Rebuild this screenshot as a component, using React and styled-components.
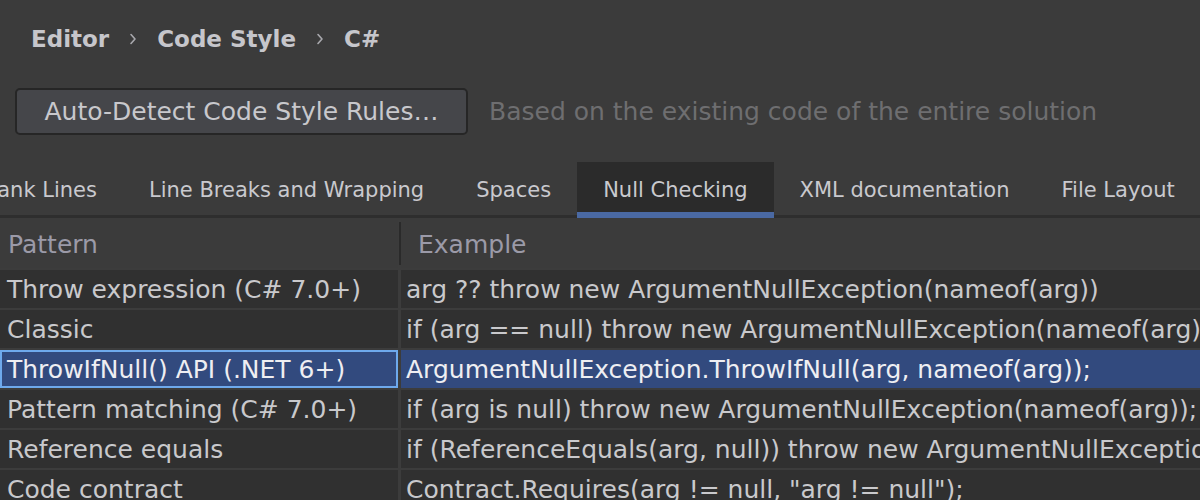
import React from "react";
import styled, { createGlobalStyle } from "styled-components";

const GlobalStyle = createGlobalStyle`
  html, body { margin: 0; padding: 0; background: #3b3b3b; }
  body { font-family: "DejaVu Sans", "Liberation Sans", sans-serif; overflow: hidden; }
`;

const Page = styled.div`
  width: 1200px;
  height: 500px;
  overflow: hidden;
  background: #3b3b3b;
  display: flex;
  flex-direction: column;
  & > * {
    flex-shrink: 0;
  }
`;

const Breadcrumb = styled.div`
  display: flex;
  align-items: center;
  height: 36px;
  margin-top: 21px;
  padding-left: 31px;
  gap: 20px;
  color: #c6c6cb;
  font-size: 23px;
  font-weight: 700;
`;

const Crumb = styled.span`
  white-space: nowrap;
`;

const Chevron = () => (
  <svg width="8" height="12" viewBox="0 0 8 12" fill="none">
    <path d="M2 1.5 L6 6 L2 10.5" stroke="#a8a8ad" strokeWidth="1.6" strokeLinecap="round" strokeLinejoin="round" />
  </svg>
);

const ActionRow = styled.div`
  display: flex;
  align-items: center;
  gap: 21px;
  margin-top: 31px;
  padding-left: 15px;
`;

const Button = styled.button`
  box-sizing: border-box;
  width: 453px;
  height: 47px;
  background: #45464a;
  border: 2px solid #262626;
  border-radius: 5px;
  color: #c8c8cc;
  font-family: inherit;
  font-size: 25px;
  padding: 0;
  white-space: nowrap;
`;

const Hint = styled.span`
  color: #6e6e70;
  font-size: 25px;
  white-space: nowrap;
`;

const TabBar = styled.div`
  margin-top: 27px;
  height: 56px;
  display: flex;
  overflow: hidden;
  box-shadow: inset 0 -3px 0 #2e2e2e;
`;

const TabTrack = styled.div`
  display: flex;
  margin-left: -49px;
`;

const Tab = styled.div`
  box-sizing: border-box;
  height: 56px;
  padding: 5px 26px 0;
  display: flex;
  align-items: center;
  white-space: nowrap;
  font-size: 21px;
  color: #c9c9ce;
  background: ${(p) => (p.$active ? "#2b2b2b" : "transparent")};
  border-bottom: 6px solid ${(p) => (p.$active ? "#4a69a3" : "transparent")};
`;

const Table = styled.div`
  margin-top: 2px;
  display: grid;
  grid-template-columns: 398px 1fr;
  column-gap: 3px;
  row-gap: 2px;
  background: #3c3c3c;
`;

const HeaderCell = styled.div`
  box-sizing: border-box;
  height: 48px;
  display: flex;
  align-items: center;
  padding-left: ${(p) => (p.$first ? "8px" : "17px")};
  font-size: 25px;
  color: #9b9aa8;
  background: #3b3b3b;
  position: relative;
  &::before {
    content: "";
    display: ${(p) => (p.$first ? "none" : "block")};
    position: absolute;
    left: -2px;
    top: 2px;
    bottom: 3px;
    width: 2px;
    background: #2a2a2a;
  }
`;

const Cell = styled.div`
  box-sizing: border-box;
  height: 38px;
  display: flex;
  align-items: center;
  padding-top: 1px;
  padding-left: ${(p) => (p.$first ? "7px" : "5px")};
  font-size: 25px;
  white-space: nowrap;
  overflow: hidden;
  color: ${(p) => (p.$selected ? "#eeeef2" : "#c9c9cc")};
  background: ${(p) => (p.$selected ? "#324a7e" : "#303030")};
  border: ${(p) => (p.$selected && p.$first ? "2px solid #6ea9ec" : "none")};
  ${(p) => (p.$selected && p.$first ? "padding-left: 5px;" : "")}
`;

const rows = [
  ["Throw expression (C# 7.0+)", "arg ?? throw new ArgumentNullException(nameof(arg))"],
  ["Classic", "if (arg == null) throw new ArgumentNullException(nameof(arg));"],
  ["ThrowIfNull() API (.NET 6+)", "ArgumentNullException.ThrowIfNull(arg, nameof(arg));", true],
  ["Pattern matching (C# 7.0+)", "if (arg is null) throw new ArgumentNullException(nameof(arg));"],
  ["Reference equals", "if (ReferenceEquals(arg, null)) throw new ArgumentNullException(nameof(arg));"],
  ["Code contract", "Contract.Requires(arg != null, \"arg != null\");"],
];

const tabs = ["Blank Lines", "Line Breaks and Wrapping", "Spaces", "Null Checking", "XML documentation", "File Layout"];

export default function App() {
  return (
    <Page>
      <GlobalStyle />
      <Breadcrumb>
        <Crumb>Editor</Crumb>
        <Chevron />
        <Crumb>Code Style</Crumb>
        <Chevron />
        <Crumb>C#</Crumb>
      </Breadcrumb>
      <ActionRow>
        <Button>Auto-Detect Code Style Rules…</Button>
        <Hint>Based on the existing code of the entire solution</Hint>
      </ActionRow>
      <TabBar>
        <TabTrack>
          {tabs.map((t) => (
            <Tab key={t} $active={t === "Null Checking"}>{t}</Tab>
          ))}
        </TabTrack>
      </TabBar>
      <Table>
        <HeaderCell $first>Pattern</HeaderCell>
        <HeaderCell>Example</HeaderCell>
        {rows.map(([a, b, sel]) => (
          <React.Fragment key={a}>
            <Cell $first $selected={sel}>{a}</Cell>
            <Cell $selected={sel}>{b}</Cell>
          </React.Fragment>
        ))}
      </Table>
    </Page>
  );
}
